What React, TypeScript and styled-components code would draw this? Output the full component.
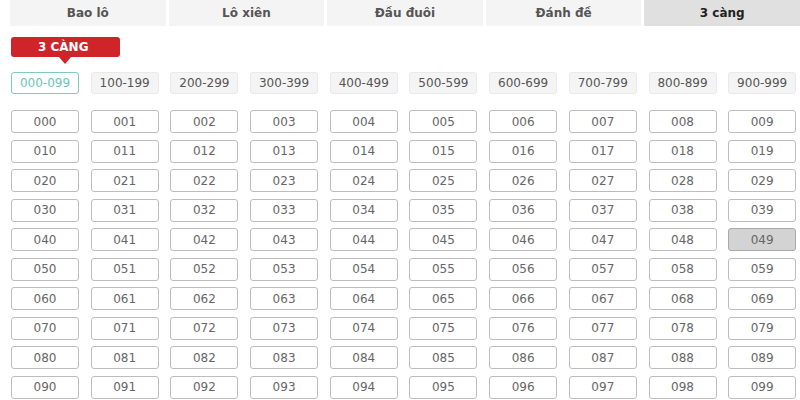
import React, { useState } from 'react'
import styled, { createGlobalStyle } from 'styled-components'

const tabs = ['Bao lô', 'Lô xiên', 'Đầu đuôi', 'Đánh đề', '3 càng']
const ranges = ['000-099', '100-199', '200-299', '300-399', '400-499', '500-599', '600-699', '700-799', '800-899', '900-999']

const pad = (n: number) => String(n).padStart(3, '0')

const App = () => {
  const [tab] = useState(4)
  const [range] = useState(0)
  const [picked] = useState(49)

  return (
    <Page>
      <GlobalStyle />
      <TabBar>
        {tabs.map((t, i) => (
          <Tab key={t} active={i === tab}>{t}</Tab>
        ))}
      </TabBar>
      <Body>
        <LabelRow>
          <Label>3 CÀNG</Label>
        </LabelRow>
        <Grid>
          {ranges.map((r, i) => (
            <RangeBtn key={r} active={i === range}>{r}</RangeBtn>
          ))}
        </Grid>
        <NumGrid>
          {Array.from({ length: 100 }, (_, i) => (
            <NumBtn key={i} picked={i === picked}>{pad(range * 100 + i)}</NumBtn>
          ))}
        </NumGrid>
      </Body>
    </Page>
  )
}

export default App

const GlobalStyle = createGlobalStyle`
body {
  margin: 0;
  background: #fff;
  font-family: "DejaVu Sans", Verdana, sans-serif;
}
`

const Page = styled.div`
width: 800px;
height: 400px;
overflow: hidden;
`

const TabBar = styled.div`
display: grid;
grid-template-columns: repeat(5, 1fr);
gap: 3px;
padding-left: 10px;
`

const Tab = styled.div<{ active?: boolean }>`
height: 26px;
display: flex;
align-items: center;
justify-content: center;
font-size: 12px;
font-weight: 700;
color: ${p => p.active ? '#222' : '#555'};
background: ${p => p.active ? '#e0e0e0' : '#f4f4f4'};
`

const Body = styled.div`
padding: 11px 4px 0 11px;
`

const LabelRow = styled.div`
display: flex;
`

const Label = styled.div`
position: relative;
width: 109px;
height: 20px;
border-radius: 3px;
background: #d0242b;
color: #fff;
font-size: 12px;
font-weight: 700;
line-height: 20px;
padding-left: 27px;
box-sizing: border-box;
&::after {
  content: '';
  position: absolute;
  left: 48px;
  top: 20px;
  border-left: 6px solid transparent;
  border-right: 6px solid transparent;
  border-top: 7px solid #d0242b;
}
`

const Grid = styled.div`
display: grid;
grid-template-columns: repeat(10, 68px);
column-gap: 11.7px;
margin-top: 15px;
`

const RangeBtn = styled.div<{ active?: boolean }>`
height: 22px;
box-sizing: border-box;
display: flex;
align-items: center;
justify-content: center;
font-size: 12px;
border-radius: 3px;
color: ${p => p.active ? '#6cc3bd' : '#555'};
background: ${p => p.active ? '#fff' : '#f4f4f4'};
border: 1px solid ${p => p.active ? '#7dcbc5' : '#e9e9e9'};
`

const NumGrid = styled.div`
display: grid;
grid-template-columns: repeat(10, 68px);
column-gap: 11.7px;
row-gap: 6.5px;
margin-top: 16px;
`

const NumBtn = styled.div<{ picked?: boolean }>`
height: 23px;
box-sizing: border-box;
display: flex;
align-items: center;
justify-content: center;
font-size: 12px;
color: #666;
border-radius: 3px;
background: ${p => p.picked ? '#d3d3d3' : '#fff'};
border: 1px solid ${p => p.picked ? '#a9a9a9' : '#bdbdbd'};
`
